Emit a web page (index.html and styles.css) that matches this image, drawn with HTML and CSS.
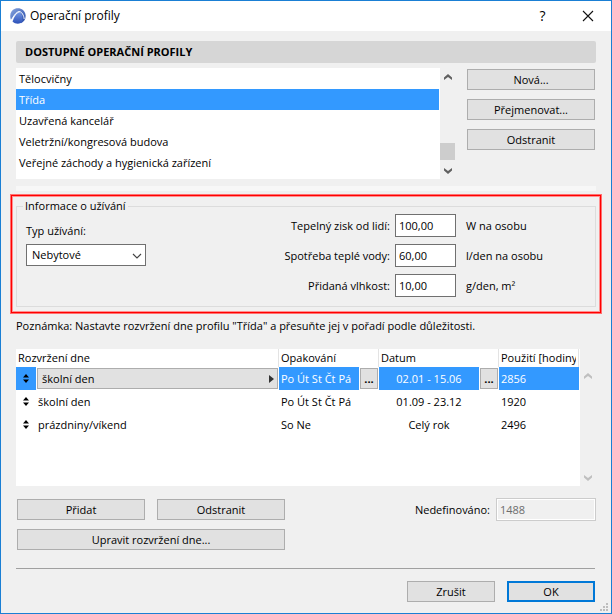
FILE: index.html
```html
<!DOCTYPE html>
<html lang="cs">
<head>
<meta charset="utf-8">
<title>Operační profily</title>
<link rel="stylesheet" href="styles.css">
</head>
<body>
<main class="dialog">
  <header class="titlebar">
    <svg class="logo" width="16" height="16" viewBox="0 0 16 16" aria-hidden="true">
      <defs>
        <linearGradient id="ball" x1="0" y1="0" x2="1" y2="1"><stop offset="0" stop-color="#88a6e0"/><stop offset="1" stop-color="#2347a6"/></linearGradient>
        <linearGradient id="arch" x1="0" y1="0" x2="0" y2="1"><stop offset="0" stop-color="#7296e2"/><stop offset="1" stop-color="#2c50b8"/></linearGradient>
      </defs>
      <path d="M1 12C-1 7 1 2 5 .8C10-.8 15 2 15.6 7C16 11 14 14 11 15.2C13 10 11 5 9 4C6 4 4 8 1 12Z" fill="url(#ball)"/>
      <path d="M2.500 13.500C4 9 6.500 5 9.200 4.200C11.500 5 13 9 12 14.600C9 16.400 5 16 2.500 13.500Z" fill="url(#arch)"/>
      <path d="M1.200 12.500C3.500 8 6 4.200 9 3.500C12 3.600 13.800 7.500 14.200 11" fill="none" stroke="#f4f8ff" stroke-width="1"/>
    </svg>
    <h1 class="title">Operační profily</h1>
    <button class="caption help" type="button" aria-label="Nápověda">?</button>
    <button class="caption" type="button" aria-label="Zavřít">
      <svg width="12" height="12" viewBox="0 0 12 12"><path d="M1 1L11 11M11 1L1 11" stroke="#111" stroke-width="1.100"/></svg>
    </button>
  </header>

  <div class="content">
    <h2 class="section">DOSTUPNÉ OPERAČNÍ PROFILY</h2>

    <div class="profiles">
      <ul class="list" role="listbox" aria-label="Dostupné operační profily">
        <li role="option">Tělocvičny</li>
        <li role="option" class="selected" aria-selected="true">Třída</li>
        <li role="option">Uzavřená kancelář</li>
        <li role="option">Veletržní/kongresová budova</li>
        <li role="option">Veřejné záchody a hygienická zařízení</li>
      </ul>
      <div class="scroll">
        <svg width="8" height="6" viewBox="0 0 8 6"><path d="M0 6V3.500L4 0L8 3.500V6L4 3Z" fill="#606060"/></svg>
        <div class="thumb"></div>
        <svg width="8" height="6" viewBox="0 0 8 6"><path d="M0 0V2.500L4 6L8 2.500V0L4 3Z" fill="#606060"/></svg>
      </div>
      <div class="actions">
        <button class="btn" type="button">Nová...</button>
        <button class="btn" type="button">Přejmenovat...</button>
        <button class="btn" type="button">Odstranit</button>
      </div>
    </div>

    <div class="strip"></div>

    <section class="highlight">
      <fieldset class="usage">
        <legend>Informace o užívání</legend>
        <div class="usage-body">
          <div class="type">
            <label for="type">Typ užívání:</label>
            <div class="select">
              <select id="type"><option>Nebytové</option></select>
              <svg width="10" height="6" viewBox="0 0 10 6"><path d="M1 1L5 5L9 1" fill="none" stroke="#444" stroke-width="1.200"/></svg>
            </div>
          </div>
          <div class="values">
            <label for="heat">Tepelný zisk od lidí:</label><input id="heat" type="text" value="100,00"><span>W na osobu</span>
            <label for="water">Spotřeba teplé vody:</label><input id="water" type="text" value="60,00"><span>l/den na osobu</span>
            <label for="moisture">Přidaná vlhkost:</label><input id="moisture" type="text" value="10,00"><span>g/den, m²</span>
          </div>
        </div>
      </fieldset>
    </section>

    <p class="note">Poznámka: Nastavte rozvržení dne profilu "Třída" a přesuňte jej v pořadí podle důležitosti.</p>

    <div class="schedule">
      <div class="table-box">
        <table>
          <colgroup><col class="c-move"><col><col class="c-repeat"><col class="c-more"><col class="c-date"><col class="c-more"><col class="c-hours"></colgroup>
          <thead>
            <tr><th colspan="2">Rozvržení dne</th><th colspan="2">Opakování</th><th colspan="2">Datum</th><th><div class="clip">Použití [hodiny]</div></th></tr>
          </thead>
          <tbody>
            <tr class="selected">
              <td class="move"><svg width="6" height="9" viewBox="0 0 6 9"><path d="M0 3.500L3 0L6 3.500ZM0 5.500H6L3 9Z"/></svg></td>
              <td class="control"><button class="btn picker" type="button"><span>školní den</span><svg width="5" height="8" viewBox="0 0 5 8"><path d="M0 0L5 4L0 8Z" fill="#333"/></svg></button></td>
              <td>Po Út St Čt Pá</td>
              <td class="control"><button class="btn more" type="button" aria-label="Upravit opakování">...</button></td>
              <td class="date">02.01 - 15.06</td>
              <td class="control"><button class="btn more" type="button" aria-label="Upravit datum">...</button></td>
              <td>2856</td>
            </tr>
            <tr>
              <td class="move"><svg width="6" height="9" viewBox="0 0 6 9"><path d="M0 3.500L3 0L6 3.500ZM0 5.500H6L3 9Z"/></svg></td>
              <td>školní den</td><td>Po Út St Čt Pá</td><td></td><td class="date">01.09 - 23.12</td><td></td><td>1920</td>
            </tr>
            <tr>
              <td class="move"><svg width="6" height="9" viewBox="0 0 6 9"><path d="M0 3.500L3 0L6 3.500ZM0 5.500H6L3 9Z"/></svg></td>
              <td>prázdniny/víkend</td><td>So Ne</td><td></td><td class="date">Celý rok</td><td></td><td>2496</td>
            </tr>
          </tbody>
        </table>
      </div>
      <div class="scroll idle">
        <svg width="8" height="6" viewBox="0 0 8 6"><path d="M0 6V3.500L4 0L8 3.500V6L4 3Z" fill="#bfbfbf"/></svg>
        <svg width="8" height="6" viewBox="0 0 8 6"><path d="M0 0V2.500L4 6L8 2.500V0L4 3Z" fill="#bfbfbf"/></svg>
      </div>
    </div>

    <div class="edit">
      <div class="edit-buttons">
        <button class="btn" type="button">Přidat</button>
        <button class="btn" type="button">Odstranit</button>
        <button class="btn wide" type="button">Upravit rozvržení dne...</button>
      </div>
      <div class="undefined">
        <label for="undef">Nedefinováno:</label>
        <input id="undef" type="text" value="1488" disabled>
      </div>
    </div>

    <footer class="footer">
      <button class="btn" type="button">Zrušit</button>
      <button class="btn primary" type="button">OK</button>
    </footer>
  </div>

  <svg class="grip" width="8" height="8" viewBox="0 0 8 8" aria-hidden="true"><path d="M6 0h2v2h-2zM3 3h2v2h-2zM6 3h2v2h-2zM0 6h2v2h-2zM3 6h2v2h-2zM6 6h2v2h-2z" fill="#bdbdbd"/></svg>
</main>
</body>
</html>
```
FILE: styles.css
```css
* { box-sizing: border-box; }

body {
  margin: 0;
  font: 11px/16px "Open Sans", "Noto Sans", sans-serif;
  color: #000;
}

button, input, select { font: inherit; color: inherit; margin: 0; }

.dialog {
  position: relative;
  min-height: 100vh;
  border: 1px solid #1a7fd4;
  background: #f0f0f0;
}

/* Title bar */
.titlebar {
  display: flex;
  align-items: center;
  height: 30px;
  padding: 0 1px 0 9px;
  background: #fff;
}
.title {
  flex: 1;
  margin: 0 0 0 4px;
  font-size: 12px;
  font-weight: 400;
}
.caption {
  display: flex;
  align-items: center;
  justify-content: center;
  width: 45px;
  height: 28px;
  padding: 0;
  border: 0;
  background: none;
}
.help { font-size: 14px; }

.content { padding: 10px 15px 11px; }

.section {
  margin: 0;
  padding: 3px 9px;
  border-radius: 2px;
  background: #d6d6d6;
  font-size: 11px;
  line-height: 16px;
  font-weight: 700;
}

.btn {
  height: 21px;
  padding: 0;
  border: 1px solid #adadad;
  background: #e1e1e1;
  line-height: 16px;
}

/* Profile list */
.profiles { display: flex; margin-top: 5px; }
.list {
  flex: 1;
  margin: 0;
  padding: 0 1px 6px 0;
  list-style: none;
  background: #fff;
}
.list li { height: 21px; padding: 0 3px; line-height: 21px; }
.selected { background: #39f; color: #fff; }

.scroll {
  display: flex;
  flex-direction: column;
  align-items: center;
  justify-content: space-between;
  width: 15px;
  padding: 6px 0 5px;
}
.thumb {
  align-self: stretch;
  height: 17px;
  margin: auto 0 8px;
  background: #cdcdcd;
}
.actions {
  display: flex;
  flex-direction: column;
  gap: 9px;
  width: 128px;
  margin: 1px 1px 0 12px;
}

.strip { height: 5px; margin-top: 7px; background: #f7f7f7; }

/* Usage group */
.highlight {
  margin: 3px -6px 0;
  padding: 3px 5px 6px;
  border: 1px solid #ff7070;
  box-shadow: inset 0 0 0 1px #f00, inset 0 0 0 2px #ff9090;
}
.usage {
  min-width: 0;
  margin: 0;
  padding: 0 0 9px;
  border: 1px solid #dcdcdc;
}
.usage legend { margin-left: 6px; padding: 0 2px; }
.usage-body { display: flex; justify-content: space-between; padding-left: 9px; }
.type { width: 120px; padding-top: 9px; }
.type label { display: block; margin-bottom: 5px; }
.select { position: relative; }
.select select {
  display: block;
  width: 100%;
  height: 22px;
  padding: 0 5px;
  border: 1px solid #707070;
  border-radius: 0;
  background: #fff;
  appearance: none;
}
.select svg { position: absolute; right: 4px; top: 9px; pointer-events: none; }
.values {
  display: grid;
  grid-template-columns: auto 61px 139px;
  row-gap: 7px;
  align-items: center;
}
.values label { padding-right: 5px; text-align: right; }
.values span { padding-left: 10px; }
.values input {
  width: 100%;
  height: 23px;
  padding: 0 3px;
  border: 1px solid #707070;
  background: #fff;
}

.note { margin: 4px 0 0; }

/* Schedule table */
.schedule { display: flex; margin-top: 15px; }
.table-box { flex: 1; min-width: 0; min-height: 137px; padding-right: 1px; background: #fff; }
table { width: 100%; table-layout: fixed; border-spacing: 0; }
.c-move { width: 20px; }
.c-repeat { width: 80px; }
.c-more { width: 20px; }
.c-date { width: 100px; }
.c-hours { width: 80px; }
th {
  height: 18px;
  padding: 0 2px;
  border-right: 1px solid #e3e3e3;
  font-weight: 400;
  line-height: 18px;
  text-align: left;
  white-space: nowrap;
}
.clip { overflow: hidden; }
td { height: 23px; padding: 0 2px; white-space: nowrap; }
.move { text-align: center; color: #000; line-height: 9px; }
tr.selected .move { background: #39f; }
.date { text-align: center; }
td.control { padding: 0 1px; background: #fff; }
.control .btn { display: flex; align-items: center; width: 100%; color: #000; }
.picker { justify-content: space-between; }
.control .picker { padding: 0 3px 0 4px; }
.control .more { justify-content: center; font-weight: 700; }
.idle { width: 16px; padding: 24px 0 5px; }

/* Bottom controls */
.edit { display: flex; justify-content: space-between; margin-top: 12px; }
.edit-buttons {
  display: grid;
  grid-template-columns: 128px 128px;
  gap: 9px 12px;
  margin: 1px 0 0 1px;
}
.wide { grid-column: 1 / -1; }
.undefined { display: flex; align-items: center; align-self: flex-start; gap: 6px; }
.undefined input {
  width: 100px;
  height: 23px;
  padding: 0 3px;
  border: 1px solid #ccc;
  box-shadow: inset 0 0 0 1px #fff;
  background: #f0f0f0;
  color: #6d6d6d;
}

.footer {
  display: flex;
  justify-content: flex-end;
  gap: 12px;
  margin: 18px 1px 0 0;
  padding-top: 12px;
  border-top: 1px solid #a0a0a0;
}
.footer .btn { width: 88px; }
.footer .primary { border: 2px solid #0078d7; }

.grip { position: absolute; right: 3px; bottom: 2px; }
```
